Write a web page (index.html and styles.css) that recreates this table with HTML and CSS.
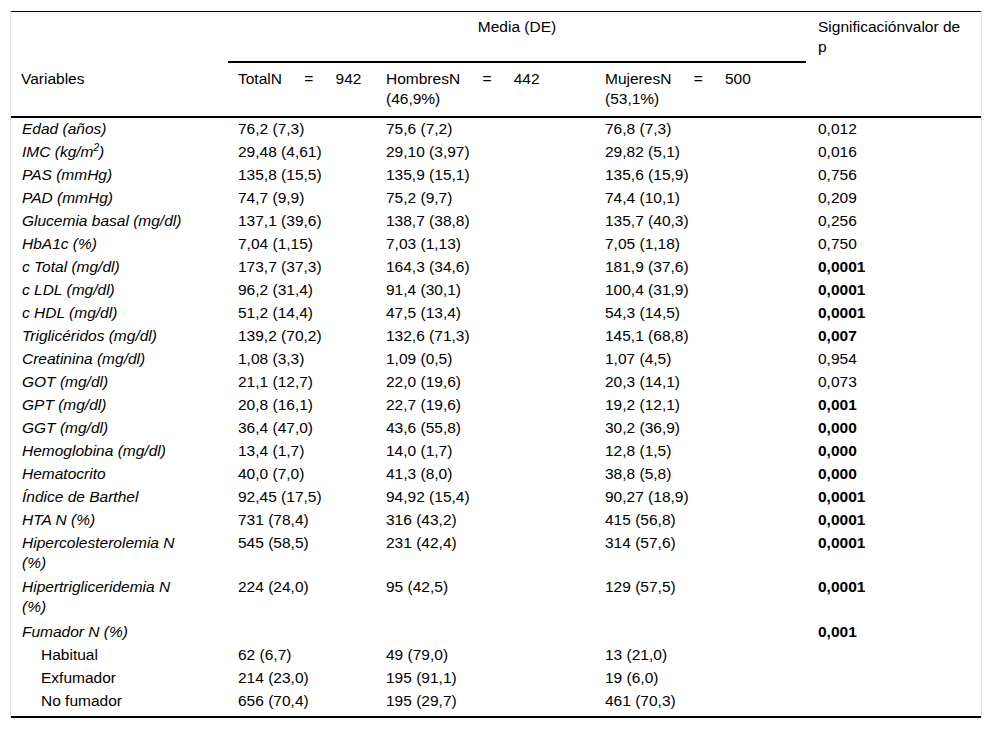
FILE: index.html
```html
<!DOCTYPE html>
<html lang="es">
<head>
<meta charset="utf-8">
<title>Tabla</title>
<link rel="stylesheet" href="styles.css">
</head>
<body>
<div class="wrap">
<table class="data">
<colgroup>
<col class="c1"><col class="c2"><col class="c3"><col class="c4"><col class="c5">
</colgroup>
<thead>
<tr class="h1">
<th></th>
<th colspan="3" class="group">Media (DE)</th>
<th>Significaciónvalor de p</th>
</tr>
<tr class="h2">
<th>Variables</th>
<th><span class="n">TotalN = 942</span></th>
<th><span class="n">HombresN = 442</span><br>(46,9%)</th>
<th><span class="n">MujeresN = 500</span><br>(53,1%)</th>
<th></th>
</tr>
</thead>
<tbody>
<tr><td class="v">Edad (años)</td><td>76,2 (7,3)</td><td>75,6 (7,2)</td><td>76,8 (7,3)</td><td>0,012</td></tr>
<tr><td class="v">IMC (kg/m<sup>2</sup>)</td><td>29,48 (4,61)</td><td>29,10 (3,97)</td><td>29,82 (5,1)</td><td>0,016</td></tr>
<tr><td class="v">PAS (mmHg)</td><td>135,8 (15,5)</td><td>135,9 (15,1)</td><td>135,6 (15,9)</td><td>0,756</td></tr>
<tr><td class="v">PAD (mmHg)</td><td>74,7 (9,9)</td><td>75,2 (9,7)</td><td>74,4 (10,1)</td><td>0,209</td></tr>
<tr><td class="v">Glucemia basal (mg/dl)</td><td>137,1 (39,6)</td><td>138,7 (38,8)</td><td>135,7 (40,3)</td><td>0,256</td></tr>
<tr><td class="v">HbA1c (%)</td><td>7,04 (1,15)</td><td>7,03 (1,13)</td><td>7,05 (1,18)</td><td>0,750</td></tr>
<tr><td class="v">c Total (mg/dl)</td><td>173,7 (37,3)</td><td>164,3 (34,6)</td><td>181,9 (37,6)</td><td><b>0,0001</b></td></tr>
<tr><td class="v">c LDL (mg/dl)</td><td>96,2 (31,4)</td><td>91,4 (30,1)</td><td>100,4 (31,9)</td><td><b>0,0001</b></td></tr>
<tr><td class="v">c HDL (mg/dl)</td><td>51,2 (14,4)</td><td>47,5 (13,4)</td><td>54,3 (14,5)</td><td><b>0,0001</b></td></tr>
<tr><td class="v">Triglicéridos (mg/dl)</td><td>139,2 (70,2)</td><td>132,6 (71,3)</td><td>145,1 (68,8)</td><td><b>0,007</b></td></tr>
<tr><td class="v">Creatinina (mg/dl)</td><td>1,08 (3,3)</td><td>1,09 (0,5)</td><td>1,07 (4,5)</td><td>0,954</td></tr>
<tr><td class="v">GOT (mg/dl)</td><td>21,1 (12,7)</td><td>22,0 (19,6)</td><td>20,3 (14,1)</td><td>0,073</td></tr>
<tr><td class="v">GPT (mg/dl)</td><td>20,8 (16,1)</td><td>22,7 (19,6)</td><td>19,2 (12,1)</td><td><b>0,001</b></td></tr>
<tr><td class="v">GGT (mg/dl)</td><td>36,4 (47,0)</td><td>43,6 (55,8)</td><td>30,2 (36,9)</td><td><b>0,000</b></td></tr>
<tr><td class="v">Hemoglobina (mg/dl)</td><td>13,4 (1,7)</td><td>14,0 (1,7)</td><td>12,8 (1,5)</td><td><b>0,000</b></td></tr>
<tr><td class="v">Hematocrito</td><td>40,0 (7,0)</td><td>41,3 (8,0)</td><td>38,8 (5,8)</td><td><b>0,000</b></td></tr>
<tr><td class="v">Índice de Barthel</td><td>92,45 (17,5)</td><td>94,92 (15,4)</td><td>90,27 (18,9)</td><td><b>0,0001</b></td></tr>
<tr><td class="v">HTA N (%)</td><td>731 (78,4)</td><td>316 (43,2)</td><td>415 (56,8)</td><td><b>0,0001</b></td></tr>
<tr class="tall"><td class="v">Hipercolesterolemia N (%)</td><td>545 (58,5)</td><td>231 (42,4)</td><td>314 (57,6)</td><td><b>0,0001</b></td></tr>
<tr class="tall more"><td class="v">Hipertrigliceridemia N (%)</td><td>224 (24,0)</td><td>95 (42,5)</td><td>129 (57,5)</td><td><b>0,0001</b></td></tr>
<tr><td class="v">Fumador N (%)</td><td></td><td></td><td></td><td><b>0,001</b></td></tr>
<tr><td class="sub">Habitual</td><td>62 (6,7)</td><td>49 (79,0)</td><td>13 (21,0)</td><td></td></tr>
<tr><td class="sub">Exfumador</td><td>214 (23,0)</td><td>195 (91,1)</td><td>19 (6,0)</td><td></td></tr>
<tr class="last"><td class="sub">No fumador</td><td>656 (70,4)</td><td>195 (29,7)</td><td>461 (70,3)</td><td></td></tr>
</tbody>
</table>
</div>
</body>
</html>
```

FILE: styles.css
```css
html, body {
  margin: 0;
  padding: 0;
  background: #fff;
}

body {
  font-family: "Liberation Sans", Arial, sans-serif;
  font-size: 15.5px;
  color: #000;
}

.wrap {
  margin: 11px 10px 0 10px;
  width: 970px;
  border-left: 1px solid #e4e4e4;
  border-right: 1px solid #e4e4e4;
}

.data {
  width: 970px;
  border-collapse: collapse;
  table-layout: fixed;
  line-height: 20px;
  border-top: 1px solid #000;
  border-bottom: 2px solid #000;
}

.c1 { width: 217px; }
.c2 { width: 148px; }
.c3 { width: 219px; }
.c4 { width: 211px; }
.c5 { width: 175px; }

.data th {
  font-weight: normal;
  text-align: left;
  vertical-align: top;
  padding: 5px 10px 5px 10px;
}

.data .h1 th:last-child {
  padding-left: 12px;
  padding-right: 8px;
}

.data .h2 th {
  padding: 6px 10px 7px 10px;
}

.data .h2 th:first-child {
  padding-top: 7px;
}

.data th.group {
  text-align: center;
  border-bottom: 2px solid #000;
}

.data thead tr.h2 {
  border-bottom: 2px solid #000;
}

.n {
  word-spacing: 18px;
}

.data td {
  vertical-align: top;
  padding: 1px 10px 2px 10px;
}

.data td:last-child {
  padding-left: 12px;
}

.data .tall td {
  padding-bottom: 3px;
}

.data .tall.more td {
  padding-bottom: 4px;
}

.data .last td {
  padding-bottom: 5px;
}

.data td.v {
  font-style: italic;
  padding-left: 11px;
  padding-right: 36px;
}

.data td.sub {
  padding-left: 30px;
}

sup {
  font-size: 10px;
  line-height: 0;
  vertical-align: 6px;
}

b {
  font-weight: bold;
}
```
